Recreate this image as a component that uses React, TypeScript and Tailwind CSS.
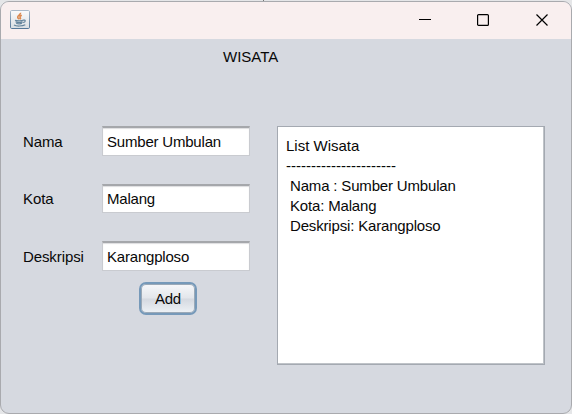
import React from "react";

const fields = [
  { label: "Nama", value: "Sumber Umbulan" },
  { label: "Kota", value: "Malang" },
  { label: "Deskripsi", value: "Karangploso" },
];

const heading = "List Wisata\n----------------------\n";

const details = ` Nama : Sumber Umbulan
 Kota: Malang
 Deskripsi: Karangploso`;

function JavaIcon() {
  return (
    <svg className="ml-[9px] mt-[8px] shrink-0" width="20" height="19" viewBox="0 0 20 19" fill="none">
      <defs>
        <linearGradient id="tile" x1="0" y1="0" x2="0" y2="1">
          <stop offset="0" stopColor="#fbfbfb" />
          <stop offset="1" stopColor="#d9dee3" />
        </linearGradient>
        <linearGradient id="edge" x1="0" y1="0" x2="0" y2="1">
          <stop offset="0" stopColor="#a9b9c8" />
          <stop offset="1" stopColor="#557899" />
        </linearGradient>
      </defs>
      <rect x="0.5" y="0.5" width="19" height="18" rx="1.2" fill="url(#tile)" stroke="url(#edge)" />
      <path d="M10.5 2.8C11 4.8 7.4 5.3 7.7 7.3C7.9 8.4 9 8.6 9.2 9.3M11.8 5.2C9.4 6.1 9.8 7.1 10.4 7.9C10.8 8.5 10.4 8.9 10 9.3" stroke="#dc8a50" strokeWidth="1.6" />
      <path d="M5 10.3C6.5 11 11.8 11 13 10.3M5.5 11.8C7.5 12.7 11 12.7 12.6 11.8M6.2 13.3C8 14.1 10.5 14.1 12 13.3M13 10.2C16 9.4 16 12.1 12.8 12.5" stroke="#65859d" strokeWidth="1.2" />
      <path d="M4 15C6 16.4 12.5 16.4 15.3 14.8" stroke="#65859d" strokeWidth="1.2" />
    </svg>
  );
}

function TitleBar() {
  return (
    <div className="flex h-[37px] shrink-0 bg-[#f9efef]">
      <JavaIcon />
      <div className="ml-auto mr-[23px] mt-[12px] flex">
        <svg className="mr-[46px]" width="12" height="14" viewBox="0 0 12 14">
          <path d="M0 5.5H12" stroke="#000" />
        </svg>
        <svg className="mr-[47px]" width="12" height="14" viewBox="0 0 12 14" fill="none">
          <rect x="0.6" y="0.6" width="10.8" height="10.8" rx="1" stroke="#000" strokeWidth="1.2" />
        </svg>
        <svg width="12" height="14" viewBox="0 0 12 14">
          <path d="M0.5 0.5L11.5 11.5M11.5 0.5L0.5 11.5" stroke="#000" strokeWidth="1.2" />
        </svg>
      </div>
    </div>
  );
}

export default function App() {
  return (
    <div className="h-[414px] w-[572px] overflow-hidden bg-[#e5e6e8] font-['Liberation_Sans',Arial,sans-serif] text-[15px] text-[#080808]">
      <div className="ml-[263px] h-px w-px bg-[#777]" />
      <div className="flex h-[413px] flex-col overflow-hidden rounded-[9px] border border-[#a9aaae] bg-[#d6d9e0]">
        <TitleBar />
        <h1 className="ml-[222px] mt-[8px] h-5 leading-5">WISATA</h1>
        <main className="mt-[59px] flex pl-[22px]">
          <div className="w-[254px]">
            <div className="flex flex-col gap-[28px]">
              {fields.map((field) => (
                <label key={field.label} className="flex h-[29.5px] items-center">
                  <span className="w-[79px] pt-[2px] leading-5 tracking-[-0.1px]">{field.label}</span>
                  <input
                    readOnly
                    defaultValue={field.value}
                    className="h-full w-[148px] border border-t-2 border-[#c9cbd0] border-t-[#a5a7ab] bg-white px-[4px] tracking-[-0.2px] shadow-[inset_0_1px_1px_#dddddf] outline-none"
                  />
                </label>
              ))}
            </div>
            <button className="ml-[116px] mt-[11px] flex h-[33px] w-[58px] items-center justify-center rounded-[7px] border-2 border-[#7699b9] bg-[linear-gradient(#f7f8fa,#e3e6eb_48%,#d5d9e0_52%,#eef2f6)] pt-[2px] tracking-[-0.3px] shadow-[inset_0_0_0_1px_#9ba9b7]">
              Add
            </button>
          </div>
          <pre className="h-[239px] w-[268px] border border-[#a4a9b1] bg-white pl-[8px] pt-[9px] font-['Liberation_Sans',Arial,sans-serif] leading-5 shadow-[inset_-1px_-1px_0_#bfc3c8]">
            {heading}
            <span className="tracking-[-0.17px]">{details}</span>
          </pre>
        </main>
      </div>
    </div>
  );
}
